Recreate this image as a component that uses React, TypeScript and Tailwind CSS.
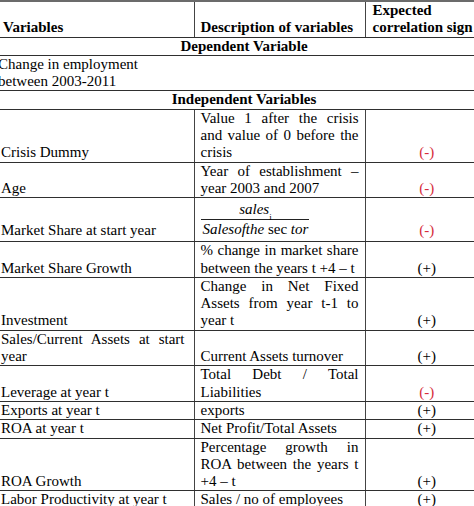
const RED = "text-[#d62b3b]";

type Row = {
  name: string[];
  desc: string[];
  sign: string;
  neg?: boolean;
};

const rows: Row[] = [
  { name: ["Crisis Dummy"], desc: ["Value 1 after the crisis", "and value of 0 before the", "crisis"], sign: "(-)", neg: true },
  { name: ["Age"], desc: ["Year of establishment –", "year 2003 and 2007"], sign: "(-)", neg: true },
];

const rowsAfter: Row[] = [
  { name: ["Market Share Growth"], desc: ["% change in market share", "between the years t +4 – t"], sign: "(+)" },
  { name: ["Investment"], desc: ["Change in Net Fixed", "Assets from year t-1 to", "year t"], sign: "(+)" },
  { name: ["Sales/Current Assets at start", "year"], desc: ["Current Assets turnover"], sign: "(+)" },
  { name: ["Leverage at year t"], desc: ["Total Debt / Total", "Liabilities"], sign: "(-)", neg: true },
  { name: ["Exports at year t"], desc: ["exports"], sign: "(+)" },
  { name: ["ROA at year t"], desc: ["Net Profit/Total Assets"], sign: "(+)" },
  { name: ["ROA Growth"], desc: ["Percentage growth in", "ROA between the years t", "+4 – t"], sign: "(+)" },
  { name: ["Labor Productivity at year t"], desc: ["Sales / no of employees"], sign: "(+)" },
];

// each line is its own block so wrapping matches; all but the last are justified
const Lines = ({ lines }: { lines: string[] }) => (
  <>
    {lines.map((l, i) => (
      <span
        key={i}
        className={i < lines.length - 1 ? "block text-justify [text-align-last:justify]" : "block"}
      >
        {l}
      </span>
    ))}
  </>
);

const cellB = "border-b border-[#2f2f2f] align-bottom";
const vLine = "border-l border-l-[#444]";

const DataRow = ({ row }: { row: Row }) => (
  <tr>
    <td className={`${cellB} pl-px pr-[9px]`}>
      <Lines lines={row.name} />
    </td>
    <td className={`${cellB} ${vLine} pl-[6px] pr-[6px]`}>
      <Lines lines={row.desc} />
    </td>
    <td className={`${cellB} ${vLine} text-center ${row.neg ? RED : ""}`}>
      {row.sign}
    </td>
  </tr>
);

export default function App() {
  return (
    <div className="w-[474px] h-[506px] overflow-hidden bg-white">
      <table
        className="table-fixed border-collapse w-[488px] text-[15px] leading-[17.3px] text-black border-t-2 border-t-[#6b6b6b]"
        style={{ fontFamily: '"Liberation Serif", "Times New Roman", serif' }}
      >
        <colgroup>
          <col className="w-[194px]" />
          <col className="w-[171px]" />
          <col className="w-[123px]" />
        </colgroup>
        <tbody>
          {/* header */}
          <tr className="font-bold">
            <td className={`${cellB} pl-[3px]`}>Variables</td>
            <td className={`${cellB} ${vLine} pl-[6px]`}>Description of variables</td>
            <td className={`${cellB} ${vLine} pl-[7px] whitespace-nowrap`}>
              Expected
              <br />
              correlation sign
            </td>
          </tr>

          <tr>
            <td colSpan={3} className={`${cellB} text-center font-bold`}>
              Dependent Variable
            </td>
          </tr>
          <tr>
            <td colSpan={3} className={cellB}>
              <span className="block -ml-[2px]">
                Change in employment
                <br />
                between 2003-2011
              </span>
            </td>
          </tr>
          <tr>
            <td colSpan={3} className={`${cellB} text-center font-bold`}>
              Independent Variables
            </td>
          </tr>

          {rows.map((r, i) => (
            <DataRow key={i} row={r} />
          ))}

          {/* market share with the fraction */}
          <tr>
            <td className={`${cellB} pl-px pb-[2px]`}>Market Share at start year</td>
            <td className={`${cellB} ${vLine} pl-[6px] pb-[3px]`}>
              <span className="inline-flex flex-col items-center italic">
                <span className="leading-[18px] pt-[2px] pb-[1px]">
                  sales<sub className="text-[9px] not-italic align-[-3px]">i</sub>
                </span>
                <span className="block w-[108px] border-t border-[#222]" />
                <span className="leading-[18px] px-[2px]">
                  Salesofthe<span className="not-italic"> sec </span>tor
                </span>
              </span>
            </td>
            <td className={`${cellB} ${vLine} text-center pb-[2px] ${RED}`}>(-)</td>
          </tr>

          {rowsAfter.map((r, i) => (
            <DataRow key={i} row={r} />
          ))}
        </tbody>
      </table>
    </div>
  );
}
